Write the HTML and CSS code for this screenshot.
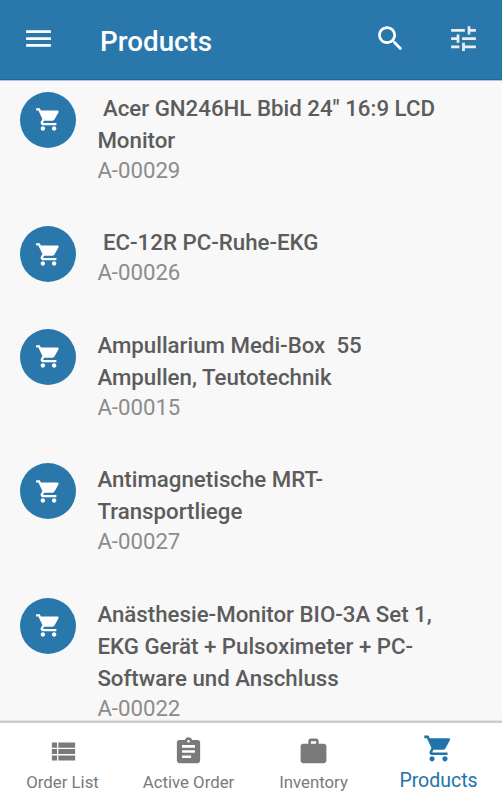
FILE: index.html
```html
<!DOCTYPE html>
<html lang="en">
<head>
<meta charset="utf-8">
<title>Products</title>
<link rel="stylesheet" href="styles.css">
</head>
<body>
<svg class="defs" aria-hidden="true">
  <symbol id="cart" viewBox="0 0 24 24"><path d="M7 18c-1.1 0-1.99.9-1.99 2S5.900 22 7 22s2-.9 2-2-.9-2-2-2zM1 2v2h2l3.600 7.590-1.350 2.450c-.16.280-.25.610-.25.960 0 1.100.9 2 2 2h12v-2H7.420c-.14 0-.25-.11-.25-.25l.03-.12.9-1.630h7.450c.75 0 1.410-.41 1.750-1.030l3.580-6.490c.08-.14.12-.31.12-.48 0-.55-.45-1-1-1H5.210l-.94-2H1zm16 16c-1.100 0-1.990.9-1.990 2s.89 2 1.990 2 2-.9 2-2-.9-2-2-2z"/></symbol>
</svg>
<header class="bar">
  <svg class="icon menu" viewBox="0 0 24 24"><path d="M3 18h18v-2H3v2zm0-5h18v-2H3v2zm0-7v2h18V6H3z"/></svg>
  <h1 class="title">Products</h1>
  <svg class="icon search" viewBox="0 0 24 24"><path d="M15.500 14h-.79l-.28-.27C15.410 12.590 16 11.110 16 9.500 16 5.910 13.090 3 9.500 3S3 5.910 3 9.500 5.910 16 9.500 16c1.610 0 3.090-.59 4.230-1.570l.27.28v.79l5 4.990L20.490 19l-4.990-5zm-6 0C7.010 14 5 11.990 5 9.500S7.010 5 9.500 5 14 7.010 14 9.500 11.990 14 9.500 14z"/></svg>
  <svg class="icon tune" viewBox="0 0 24 24"><path d="M3 17v2h6v-2H3zM3 5v2h10V5H3zm10 16v-2h8v-2h-8v-2h-2v6h2zM7 9v2H3v2h4v2h2V9H7zm14 4v-2H11v2h10zm-6-4h2V7h4V5h-4V3h-2v6z"/></svg>
</header>
<main class="list">
  <article class="item"><span class="avatar"><svg><use href="#cart"/></svg></span><div><h2 class="name">&nbsp;Acer GN246HL Bbid 24" 16:9 LCD<br>Monitor</h2><p class="code">A-00029</p></div></article>
  <article class="item"><span class="avatar"><svg><use href="#cart"/></svg></span><div><h2 class="name">&nbsp;EC-12R PC-Ruhe-EKG</h2><p class="code">A-00026</p></div></article>
  <article class="item"><span class="avatar"><svg><use href="#cart"/></svg></span><div><h2 class="name">Ampullarium Medi-Box&nbsp; 55<br>Ampullen, Teutotechnik</h2><p class="code">A-00015</p></div></article>
  <article class="item"><span class="avatar"><svg><use href="#cart"/></svg></span><div><h2 class="name">Antimagnetische MRT-<br>Transportliege</h2><p class="code">A-00027</p></div></article>
  <article class="item"><span class="avatar"><svg><use href="#cart"/></svg></span><div><h2 class="name">Anästhesie-Monitor BIO-3A Set 1,<br>EKG Gerät + Pulsoximeter + PC-<br>Software und Anschluss</h2><p class="code">A-00022</p></div></article>
</main>
<nav class="tabs">
  <a class="tab"><svg viewBox="0 0 24 24"><path d="M3 9h4V5H3v4zm0 5h4v-4H3v4zm5 0h13v-4H8v4zm0-9v4h13V5H8zM3 19h4v-4H3v4zm5 0h13v-4H8v4z"/></svg><span>Order List</span></a>
  <a class="tab"><svg viewBox="0 0 24 24"><path d="M19 3h-4.180C14.400 1.840 13.300 1 12 1c-1.300 0-2.400.84-2.820 2H5c-1.100 0-2 .9-2 2v14c0 1.100.9 2 2 2h14c1.100 0 2-.9 2-2V5c0-1.100-.9-2-2-2zm-7 0c.55 0 1 .45 1 1s-.45 1-1 1-1-.45-1-1 .45-1 1-1zm2 14H7v-2h7v2zm3-4H7v-2h10v2zm0-4H7V7h10v2z"/></svg><span>Active Order</span></a>
  <a class="tab"><svg viewBox="0 0 24 24"><path d="M20 6h-4V4c0-1.110-.89-2-2-2h-4c-1.110 0-2 .89-2 2v2H4c-1.110 0-1.990.89-1.990 2L2 19c0 1.110.89 2 2 2h16c1.110 0 2-.89 2-2V8c0-1.110-.89-2-2-2zm-6 0h-4V4h4v2z"/></svg><span>Inventory</span></a>
  <a class="tab active"><svg><use href="#cart"/></svg><span>Products</span></a>
</nav>
</body>
</html>
```
FILE: styles.css
```css
* { box-sizing: border-box; }
body {
  margin: 0;
  height: 800px;
  display: flex;
  flex-direction: column;
  overflow: hidden;
  background: #f8f8f8;
  font-family: Roboto, "Liberation Sans", sans-serif;
}
svg { fill: currentColor; flex: none; display: block; }
.defs { display: none; }
.bar {
  flex: none;
  height: 80px;
  display: flex;
  align-items: center;
  padding: 0 22px;
  background: #2977ab;
  box-shadow: inset 0 -1px #146ba5, 0 1px #b4c0dc;
  color: #fff;
}
.icon { width: 33px; height: 33px; }
.menu { margin-top: -3px; }
.title { flex: 1; margin: 4px 0 0 45px; font-size: 27.800px; font-weight: 500; line-height: 36px; }
.search { margin-right: 39.500px; margin-top: -3px; }
.tune { margin-top: -3px; margin-right: .5px; color: #ededf0; }
.list { flex: 1; min-height: 0; overflow: hidden; padding-top: 11.600px; }
.item { display: flex; gap: 21px; padding-left: 20.400px; margin-bottom: 41.600px; }
.avatar {
  flex: none;
  display: flex;
  align-items: center;
  justify-content: center;
  width: 56px;
  height: 56px;
  border-radius: 50%;
  background: #2977ab;
  color: #fff;
}
.avatar svg { width: 27px; height: 27px; }
.name { margin: 0; font-size: 22.270px; font-weight: 500; line-height: 32px; color: #5c5c5c; white-space: nowrap; }
.code { margin: 0; font-size: 22.200px; line-height: 29px; color: #8c8c8c; }
.tabs {
  flex: none;
  height: 79px;
  display: flex;
  border-top: 2px solid #ccc;
  box-shadow: 0 -1px 1px #e4e4e4;
  background: #fff;
  color: #7a7a7a;
}
.tab { flex: 1; display: flex; flex-direction: column; align-items: center; padding-top: 12.500px; font-size: 16.800px; line-height: 24px; }
.tab svg { width: 31px; height: 31px; margin-bottom: 3.500px; }
.tab:first-child { padding-right: 1px; }
.tab:first-child svg { transform: translateX(1px); }
.tab.active { color: #2074ab; font-size: 19.500px; padding-top: 10px; padding-right: 1px; }
.tab.active svg { margin-bottom: 5px; }
```
